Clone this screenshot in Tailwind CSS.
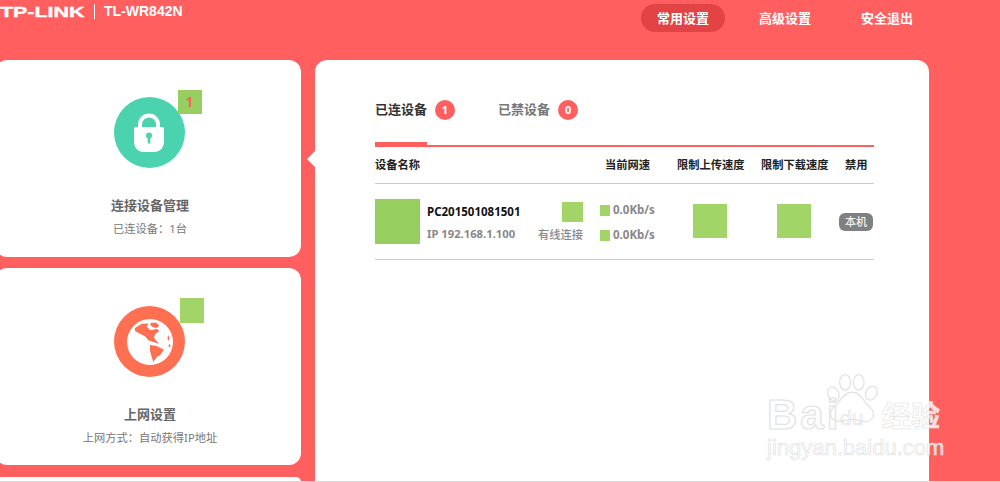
<!DOCTYPE html>
<html lang="zh">
<head>
<meta charset="utf-8">
<script src="https://cdn.jsdelivr.net/npm/@tailwindcss/browser@4"></script>
</head>
<body class="m-0 h-[482px] w-[1000px] overflow-hidden relative bg-[#ff5f5f] font-['Noto_Sans','Noto_Sans_CJK_SC',sans-serif]">
  <header class="h-[60px] flex items-start justify-between text-white">
    <div class="flex items-center h-[23px] font-['Liberation_Sans',sans-serif] font-bold">
      <span class="text-[15.5px] w-[85px] [transform:scaleX(1.38)] origin-left whitespace-nowrap leading-none font-black [-webkit-text-stroke:0.4px_#fff]">TP-LINK</span>
      <span class="ml-[9px] h-[15px] w-px bg-white"></span>
      <span class="ml-[9px] text-[14px] whitespace-nowrap">TL-WR842N</span>
    </div>
    <nav class="flex items-center mt-[4px] mr-[87px] text-[13px] font-bold leading-none">
      <a class="w-[84px] h-[28px] flex items-center justify-center rounded-full bg-[#e24344]">常用设置</a>
      <a class="w-[102px] text-center ml-[9px]">高级设置</a>
      <a class="w-[52px] text-center ml-[25px]">安全退出</a>
    </nav>
  </header>

  <div class="flex items-start">
    <aside class="w-[306px] -ml-[5px] flex flex-col shrink-0">
      <section class="relative h-[197px] bg-white rounded-[12px] flex flex-col items-center pl-[4px]">
        <div class="relative mt-[37px] mr-[2px] w-[71px] h-[71px] rounded-full bg-[#4bd2ae] flex items-center justify-center">
          <svg width="30" height="39" viewBox="0 0 30 39" class="-mt-[1px]">
            <path d="M6 16V11.5a9 9 0 0 1 18 0V16" fill="none" stroke="#fff" stroke-width="4"/>
            <path d="M1.5 14h27a1.5 1.5 0 0 1 1.5 1.5V28c0 7-4 11-10 11H10C4 39 0 35 0 28V15.5A1.5 1.5 0 0 1 1.5 14z" fill="#fff"/>
            <circle cx="15" cy="22.500" r="3" fill="#4bd2ae"/>
            <path d="M13.7 23h2.600v7.500h-2.600z" fill="#4bd2ae"/>
          </svg>
          <span class="absolute left-[64px] top-[-7px] w-[24px] h-[24px] bg-[#96cf5f] text-[#ff5f5f] text-[14px] font-bold flex items-center justify-center leading-none">1</span>
        </div>
        <h2 class="mt-[27px] text-[13px] font-bold text-[#666] leading-[20px]">连接设备管理</h2>
        <p class="mt-[4px] text-[11.25px] text-[#777] leading-[18px]">已连设备<span class="font-['Noto_Sans_CJK_TC']">：</span>1台</p>
      </section>
      <section class="relative mt-[11px] h-[197px] bg-white rounded-[12px] flex flex-col items-center pl-[4px]">
        <div class="relative mt-[38px] mr-[1px] w-[71px] h-[71px] rounded-full bg-[#ff6f52] flex items-center justify-center">
          <svg width="46" height="46" viewBox="0 0 46 46">
            <circle cx="23" cy="23" r="23" fill="#fff"/>
            <path d="M8 9L14.700 4.700L21.300 4.500L19.700 8L23.700 11.300L29.700 9.700L32.300 12L28 15.300L27 18.700L29.700 22.300L32.300 24.700L26.300 23L21.300 21.300L18 17.300L13 14.700L8 12z" fill="#ff6f52"/>
            <path d="M23.500 4l5-.5 4 3-3 2.500-4-1-2-2z" fill="#ff6f52"/>
            <path d="M23 26L29.700 27L37 30.700L33 36.300L29.700 38L26.300 43L24.700 38L23 32z" fill="#ff6f52"/>
            <path d="M41 16l1.500 3-.5 3-1.500-2zM42 25l1.500 1-.5 2.500-1.500-1z" fill="#ff6f52"/>
          </svg>
          <span class="absolute left-[66px] top-[-8px] w-[24px] h-[25px] bg-[#a2d568]"></span>
        </div>
        <h2 class="mt-[27px] text-[13px] font-bold text-[#666] leading-[20px]">上网设置</h2>
        <p class="mt-[4px] text-[11.25px] text-[#777] leading-[18px] whitespace-nowrap">上网方式<span class="font-['Noto_Sans_CJK_TC']">：</span>自动获得IP地址</p>
      </section>
      <section class="mt-[12px] h-[5px] bg-white rounded-t-[12px]"></section>
    </aside>

    <main class="relative ml-[14px] w-[614px] h-[422px] bg-white rounded-t-[12px] pl-[60px] pr-[55px] shrink-0">
      <span class="absolute -left-[8px] top-[91px] w-0 h-0 border-y-[8px] border-y-transparent border-r-[8px] border-r-white"></span>
      <div class="flex items-center h-[81px] pt-[19px] pb-[1px] text-[13px] font-bold">
        <span class="text-[#333]">已连设备</span>
        <span class="ml-[8px] w-[20px] h-[20px] rounded-full bg-[#ff5f5f] text-white text-[11px] flex items-center justify-center leading-none">1</span>
        <span class="ml-[43px] text-[#777]">已禁设备</span>
        <span class="ml-[8px] w-[20px] h-[20px] rounded-full bg-[#ff5f5f] text-white text-[11px] flex items-center justify-center leading-none">0</span>
      </div>
      <div class="relative h-[2px] bg-[#ff5f5f] mt-[4px]">
        <span class="absolute left-0 bottom-0 w-[52px] h-[5px] bg-[#ff5f5f]"></span>
      </div>
      <div class="flex items-center h-[36px] text-[11.25px] font-bold text-[#222] leading-none">
        <span class="w-[230px]">设备名称</span>
        <span class="w-[72px]">当前网速</span>
        <span class="w-[84px]">限制上传速度</span>
        <span class="w-[84px]">限制下载速度</span>
        <span>禁用</span>
      </div>
      <div class="h-px bg-[#ffb4b4]"></div>
      <div class="flex items-center h-[75px]">
        <span class="w-[45px] h-[45px] bg-[#96cf5f] shrink-0"></span>
        <div class="ml-[7px] w-[90px] shrink-0 flex flex-col gap-[6px] font-bold mt-[2px]">
          <span class="text-[11.5px] leading-[16px] text-[#111] whitespace-nowrap">PC201501081501</span>
          <span class="text-[11.25px] leading-[16px] text-[#888] whitespace-nowrap">IP 192.168.1.100</span>
        </div>
        <div class="ml-[21px] w-[45px] shrink-0 flex flex-col items-end gap-[5px] mt-[1px]">
          <span class="w-[21px] h-[20px] bg-[#a2d568]"></span>
          <span class="text-[11.25px] leading-[16px] text-[#888] font-medium whitespace-nowrap">有线连接</span>
        </div>
        <div class="ml-[17px] w-[60px] shrink-0 flex flex-col gap-[9px] text-[11.5px] font-bold text-[#888] leading-[16px] mt-[2px]">
          <span class="flex items-center gap-[3px]"><i class="w-[10px] h-[11px] bg-[#a2d568]"></i>0.0Kb/s</span>
          <span class="flex items-center gap-[3px]"><i class="w-[10px] h-[11px] bg-[#a2d568]"></i>0.0Kb/s</span>
        </div>
        <span class="ml-[33px] w-[34px] h-[34px] bg-[#a2d568] shrink-0 -mt-[2px]"></span>
        <span class="ml-[50px] w-[34px] h-[34px] bg-[#a2d568] shrink-0 -mt-[2px]"></span>
        <span class="ml-[28px] w-[34px] h-[18px] rounded-[6px] bg-[#808080] text-white/90 text-[11px] font-medium flex items-center justify-center leading-none shrink-0">本机</span>
      </div>
      <div class="h-px bg-[#ffb4b4]"></div>
    </main>
  </div>

  <!-- watermark -->
  <div class="absolute left-[767px] top-[374px] w-[210px] h-[102px] pointer-events-none">
    <svg class="absolute left-[60px] top-0" width="56" height="60" viewBox="0 0 62 66" fill="none" stroke="#e4e4e4" stroke-width="1.500">
      <ellipse cx="7" cy="22" rx="6" ry="8" transform="rotate(-25 7 22)"/>
      <ellipse cx="20" cy="9" rx="6" ry="8.500"/>
      <ellipse cx="35" cy="9" rx="6" ry="8.500"/>
      <ellipse cx="49" cy="21" rx="6" ry="8" transform="rotate(25 49 21)"/>
      <path d="M28 20c8 0 12 8 16 13 4 4 9 7 7 14-2 5-8 6-13 5-4-1-7-2-10-2s-7 1-11 2c-6 1-12-1-13-6-1-7 4-10 8-14 4-5 8-12 16-12z"/>
    </svg>
    <span class="absolute left-[0px] top-[20px] font-['Liberation_Sans',sans-serif] text-[42px] leading-[42px] font-bold text-transparent [-webkit-text-stroke:1.2px_#e2e2e2] tracking-[3px]">Bai</span>
    <span class="absolute left-[73px] top-[33px] font-['Liberation_Sans',sans-serif] text-[21px] leading-[22px] text-transparent [-webkit-text-stroke:0.7px_#e2e2e2]">du</span>
    <span class="absolute left-[115px] top-[25px] text-[29px] leading-[34px] font-bold text-white/80 [-webkit-text-stroke:0.6px_#e2e2e2] whitespace-nowrap">经验</span>
    <span class="absolute left-[0px] top-[62px] font-['Liberation_Sans',sans-serif] text-[22px] leading-[24px] text-white/70 [-webkit-text-stroke:0.7px_#e2e2e2] whitespace-nowrap">jingyan.baidu.com</span>
  </div>
  <div class="absolute left-0 right-0 bottom-0 h-px bg-[#d8d8d8]"></div>
</body>
</html>
